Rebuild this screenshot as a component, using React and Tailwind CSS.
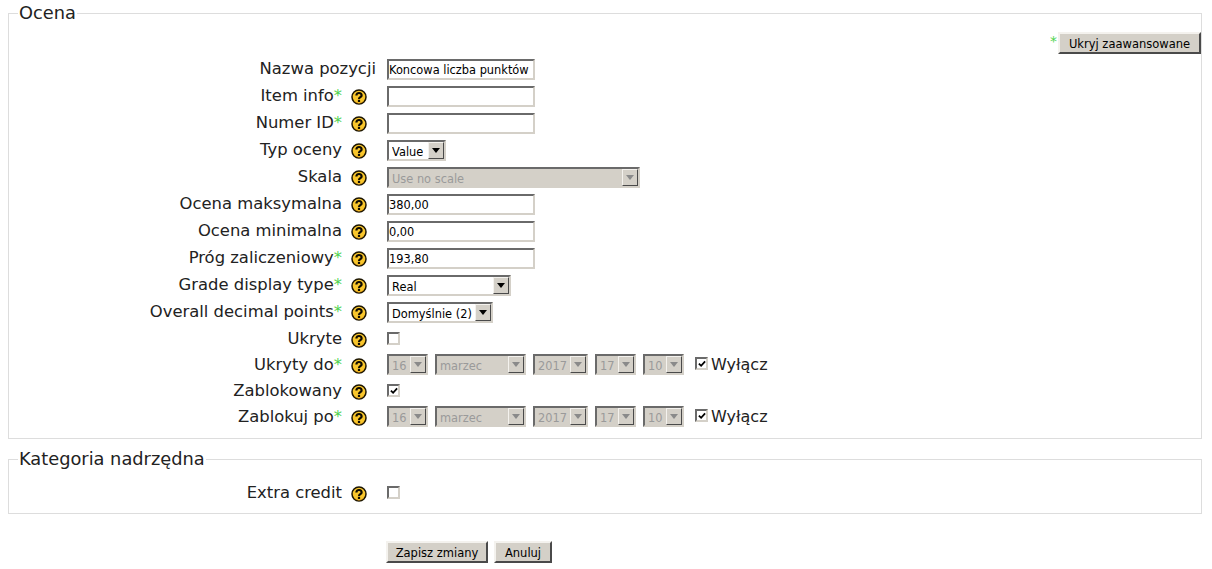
import React from "react";

// Windows-classic style bevels
const sunken = "border-2 border-t-[#6a6a6a] border-l-[#6a6a6a] border-r-[#d4d0c8] border-b-[#d4d0c8]";
const raised = "border-t-[#f4f2ee] border-l-[#f4f2ee] border-r-[#4a4a4a] border-b-[#4a4a4a]";

function HelpIcon() {
  return (
    <svg width="16" height="16" viewBox="0 0 16 16" className="block">
      <circle cx="8" cy="8" r="7" fill="#f9c62c" stroke="#1c1500" strokeWidth="1.5" />
      <path d="M3 11.8a7 7 0 0 0 10 0a6 6 0 0 1-10 0z" fill="#d98f12" />
      <path d="M5.4 6.4c0-3.2 5.2-3.2 5.2 0c0 1.8-2.6 1.7-2.6 3.5" fill="none" stroke="#0f0b00" strokeWidth="2.2" />
      <rect x="6.9" y="10.8" width="2.2" height="2.2" fill="#0f0b00" />
    </svg>
  );
}

function Star() {
  return <span className="text-[#4fd34f]">*</span>;
}

function Row({ label, star, help = true, h = "h-[27px]", low, children }) {
  return (
    <div className={`flex items-start ${h}`}>
      <div className={`flex w-[367px] shrink-0 justify-end text-[16.4px] ${low ? "pt-px" : ""}`}>
        <span className="leading-[19px]">
          {label}
          {star && <Star />}
        </span>
        {help && (
          <span className="mx-[9px] mt-[3px]">
            <HelpIcon />
          </span>
        )}
      </div>
      <div className="ml-[11px] flex items-start">{children}</div>
    </div>
  );
}

function TextBox({ value = "" }) {
  return (
    <input
      type="text"
      readOnly
      value={value}
      className={`h-[21px] w-[148px] bg-white text-[11.4px] text-black outline-none ${sunken}`}
    />
  );
}

function Arrow({ disabled }) {
  return (
    <span className={`flex h-[17px] w-[16px] shrink-0 items-center justify-center border bg-[#d4d0c8] ${raised}`}>
      <svg width="8" height="5" viewBox="0 0 8 5" className="block">
        <path d="M0 0h8L4 5z" fill={disabled ? "#8a8a8a" : "#000"} />
      </svg>
    </span>
  );
}

function Select({ value, w, disabled }) {
  return (
    <div
      className={`flex h-[21px] items-center justify-between pl-[3px] text-[11.4px] ${sunken} ${w} ${
        disabled ? "bg-[#d4d0c8] text-[#9a9a9a]" : "bg-white text-black"
      }`}
    >
      <span className="truncate pt-[4px]">{value}</span>
      <Arrow disabled={disabled} />
    </div>
  );
}

function Check({ on, className = "" }) {
  return (
    <span className={`flex h-[13px] w-[13px] shrink-0 items-center justify-center bg-white ${sunken} ${className}`}>
      {on && (
        <svg width="8" height="8" viewBox="0 0 9 9" className="block">
          <path d="M1 4l2.5 2.5L8 1.5" fill="none" stroke="#000" strokeWidth="2" />
        </svg>
      )}
    </span>
  );
}

function DateFields() {
  return (
    <>
      <div className="flex gap-[7px]">
        <Select value="16" w="w-[41px]" disabled />
        <Select value="marzec" w="w-[91px]" disabled />
        <Select value="2017" w="w-[55px]" disabled />
        <Select value="17" w="w-[41px]" disabled />
        <Select value="10" w="w-[41px]" disabled />
      </div>
      <Check on className="ml-[11px] mt-[3px]" />
      <span className="ml-[3px] pt-px leading-[19px]">Wyłącz</span>
    </>
  );
}

function Button({ children, w }) {
  return (
    <button
      type="button"
      className={`h-[22px] border-2 bg-[#d4d0c8] pt-[2px] text-center text-[11.5px] text-black ${raised} ${w}`}
    >
      {children}
    </button>
  );
}

function Fieldset({ title, children, className = "" }) {
  return (
    <fieldset className={`border border-[#dddddd] ${className}`}>
      <legend className="ml-[9px] h-[21px] px-px text-[17.8px] leading-[19px]">{title}</legend>
      {children}
    </fieldset>
  );
}

export default function App() {
  return (
    <div className="h-[569px] w-[1212px] overflow-hidden bg-white pl-[8px] pt-[3px] font-['DejaVu_Sans',sans-serif] text-base text-[#222222]">
      <div className="w-[1194px]">
        <Fieldset title="Ocena" className="pb-[5px]">
          <div className="mb-[5px] mt-[8px] flex h-[22px] justify-end">
            <span className="pt-px text-[14px] leading-[16px]">
              <Star />
            </span>
            <span className="w-px" />
            <Button w="w-[143px]">Ukryj zaawansowane</Button>
          </div>
          <Row label="Nazwa pozycji" help={false}>
            <TextBox value="Koncowa liczba punktów" />
          </Row>
          <Row label="Item info" star>
            <TextBox />
          </Row>
          <Row label="Numer ID" star>
            <TextBox />
          </Row>
          <Row label="Typ oceny">
            <Select value="Value" w="w-[59px]" />
          </Row>
          <Row label="Skala">
            <Select value="Use no scale" w="w-[253px]" disabled />
          </Row>
          <Row label="Ocena maksymalna">
            <TextBox value="380,00" />
          </Row>
          <Row label="Ocena minimalna">
            <TextBox value="0,00" />
          </Row>
          <Row label="Próg zaliczeniowy" star>
            <TextBox value="193,80" />
          </Row>
          <Row label="Grade display type" star>
            <Select value="Real" w="w-[124px]" />
          </Row>
          <Row label="Overall decimal points" star>
            <Select value="Domyślnie (2)" w="w-[106px]" />
          </Row>
          <Row label="Ukryte" h="h-[25px]">
            <Check className="mt-[3px]" />
          </Row>
          <Row label="Ukryty do" star h="h-[26px]" low>
            <DateFields />
          </Row>
          <Row label="Zablokowany" h="h-[26px]" low>
            <Check on className="mt-[4px]" />
          </Row>
          <Row label="Zablokuj po" star low>
            <DateFields />
          </Row>
        </Fieldset>

        <Fieldset title="Kategoria nadrzędna" className="mt-[10px]">
          <div className="pt-[13px]">
            <Row label="Extra credit" h="h-[19px]">
              <Check className="mt-[3px]" />
            </Row>
          </div>
          <div className="h-[11px]" />
        </Fieldset>

        <div className="ml-[378px] mt-[27px] flex gap-[6px]">
          <Button w="w-[102px]">Zapisz zmiany</Button>
          <Button w="w-[58px]">Anuluj</Button>
        </div>
      </div>
    </div>
  );
}
